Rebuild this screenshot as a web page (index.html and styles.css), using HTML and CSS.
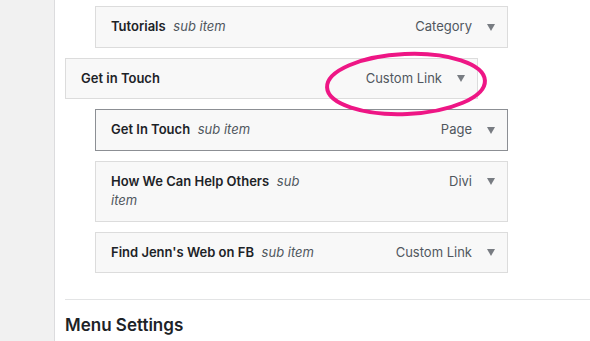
FILE: index.html
```html
<!DOCTYPE html>
<html>
<head>
<meta charset="utf-8">
<link rel="stylesheet" href="styles.css">
</head>
<body>
<div class="page">
  <aside class="sidebar"></aside>
  <main class="content">
    <ul class="menu">
      <li class="item depth-1">
        <div class="handle">
          <span class="title"><b>Tutorials</b> <i>sub item</i></span>
          <span class="controls"><span class="type">Category</span><span class="arrow"></span></span>
        </div>
      </li>
      <li class="item depth-0">
        <div class="handle">
          <span class="title"><b>Get in Touch</b></span>
          <span class="controls"><span class="type">Custom Link</span><span class="arrow"></span></span>
        </div>
      </li>
      <li class="item depth-1">
        <div class="handle active">
          <span class="title"><b>Get In Touch</b> <i>sub item</i></span>
          <span class="controls"><span class="type">Page</span><span class="arrow"></span></span>
        </div>
      </li>
      <li class="item depth-1">
        <div class="handle">
          <span class="title"><b>How We Can Help Others</b> <i>sub item</i></span>
          <span class="controls"><span class="type">Divi</span><span class="arrow"></span></span>
        </div>
      </li>
      <li class="item depth-1">
        <div class="handle">
          <span class="title"><b>Find Jenn's Web on FB</b> <i>sub item</i></span>
          <span class="controls"><span class="type">Custom Link</span><span class="arrow"></span></span>
        </div>
      </li>
    </ul>
    <hr class="divider">
    <h2 class="settings">Menu Settings</h2>
  </main>
  <svg class="circle" width="170" height="72" viewBox="0 0 170 72">
    <ellipse cx="85" cy="36" rx="79" ry="30" fill="none" stroke="#ee1685" stroke-width="4" transform="rotate(-2.5 85 36)"/>
  </svg>
</div>
</body>
</html>
```
FILE: styles.css
```css
* { box-sizing: border-box; }
html, body { margin: 0; padding: 0; background: #fff; }
body {
  font-family: Inter, "Liberation Sans", Arial, sans-serif;
  font-size: 13px;
  color: #1d2327;
  width: 590px;
  height: 341px;
  overflow: hidden;
}
.page {
  position: relative;
  display: flex;
  height: 341px;
}
.sidebar {
  width: 55px;
  flex: none;
  background: #f1f1f1;
  border-right: 1px solid #dcdcde;
}
.content {
  flex: 1;
  padding-left: 10px;
  padding-top: 6px;
}
.menu {
  list-style: none;
  margin: 0;
  padding: 0;
  display: flex;
  flex-direction: column;
  gap: 10px;
}
.item { width: 413px; }
.item.depth-1 { margin-left: 30px; }
.handle {
  display: flex;
  align-items: flex-start;
  justify-content: space-between;
  background: #f8f8f8;
  border: 1px solid #dcdcdc;
  padding: 10px 12px 10px 15px;
  line-height: 19.5px;
}
.handle.active { border-color: #8c8f94; }
.title {
  flex: 0 0 208px;
}
.title b { font-weight: 600; color: #1d2327; }
.title i { color: #50575e; margin-left: 4px; }
.controls {
  display: flex;
  align-items: center;
  gap: 15px;
  color: #50575e;
  white-space: nowrap;
  height: 19.5px;
}
.arrow {
  width: 0;
  height: 0;
  border-left: 4.5px solid transparent;
  border-right: 4.5px solid transparent;
  border-top: 7px solid #787c82;
  margin-top: 1px;
}
.divider {
  border: 0;
  border-top: 1px solid #e3e4e5;
  margin: 26px 0 0 0;
}
.settings {
  font-size: 17px;
  font-weight: 600;
  margin: 15px 0 0 0;
  color: #1d2327;
}
.circle {
  position: absolute;
  left: 321px;
  top: 48px;
}
```
